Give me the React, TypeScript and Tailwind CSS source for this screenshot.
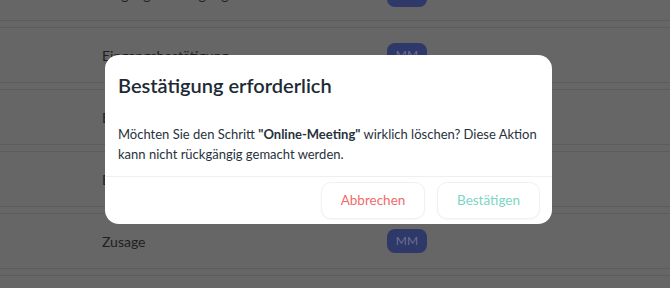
import { Fragment } from "react"

const rows = [
  { label: "Eingangsbestätigung", height: "h-[52px]" },
  { label: "Eingangsbestätigung", height: "h-[56px]" },
  { label: "Einladung", height: "h-[56px]" },
  { label: "Erinnerung", height: "h-[56px]" },
  { label: "Zusage", height: "h-[56px]" },
  { label: "Absage", height: "h-[56px]" }
]

const App = () => {
  return (
    <main className="relative h-[288px] w-[670px] overflow-hidden bg-[#666666] font-['Lato','Noto_Sans',sans-serif]">
      {/* page behind the dimmed backdrop */}
      <div className="-mt-[31px] flex flex-col gap-[6px]">
        {rows.map((row, index) => (
          <Fragment key={index}>
            <div
              className={`flex ${row.height} items-center border-y border-[#5c5c5c] pl-[102px] ${index === 0 ? "border-t-0" : ""}`}>
              <span className="w-[285px] text-[14px] text-[#1d1f22]">{row.label}</span>
              <span className="flex h-[24px] w-[40px] items-center justify-center rounded-[8px] bg-[#2e396a] text-[12px] text-[#6b7190]">
                MM
              </span>
            </div>
          </Fragment>
        ))}
      </div>

      {/* confirm dialog */}
      <div className="absolute left-[105px] top-[55px] flex w-[447px] flex-col rounded-[14px] bg-white">
        <h2 className="px-[13px] pt-[16px] text-[20px] font-semibold leading-[28px] text-[#1c2a35]">
          Bestätigung erforderlich
        </h2>
        <p className="px-[13px] pb-[12px] pt-[26px] text-[13px] leading-[19.5px] text-[#27323c]">
          Möchten Sie den Schritt <span className="font-bold">"Online-Meeting"</span> wirklich löschen? Diese Aktion
          kann nicht rückgängig gemacht werden.
        </p>
        <div className="flex justify-end gap-[12px] border-t border-[#efefef] px-[12px] pb-[5px] pt-[5px]">
          <button className="h-[37px] w-[104px] rounded-[10px] border border-[#f1f1f1] bg-white text-[13.5px] text-[#f26b6b] shadow-[0_1px_2px_rgba(0,0,0,0.04)]">
            Abbrechen
          </button>
          <button className="h-[37px] w-[103px] rounded-[10px] border border-[#f1f1f1] bg-white text-[13.5px] text-[#7ed5c5] shadow-[0_1px_2px_rgba(0,0,0,0.04)]">
            Bestätigen
          </button>
        </div>
      </div>
    </main>
  )
}

export default App
